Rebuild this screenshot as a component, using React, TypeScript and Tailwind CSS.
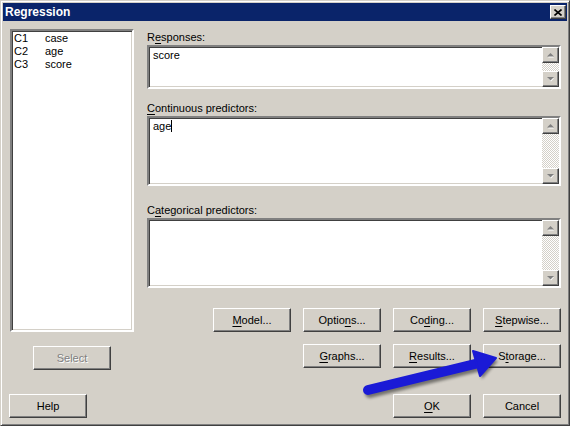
import React from 'react';

const raised =
  'border border-t-white border-l-white border-r-[#404040] border-b-[#404040] shadow-[inset_-1px_-1px_#808080] bg-[#d4d0c8]';
const sunken =
  'border-2 border-t-[#808080] border-l-[#808080] border-r-white border-b-white shadow-[inset_1px_1px_#404040,inset_-1px_-1px_#d4d0c8] bg-white';

const Btn = ({ children, disabled }: { children: React.ReactNode; disabled?: boolean }) => (
  <button
    className={`${raised} w-[78px] h-[24px] flex items-center justify-center text-[11px] ${
      disabled ? 'text-[#808080] [text-shadow:1px_1px_0_#fff]' : 'text-black'
    }`}
  >
    {children}
  </button>
);

const U = ({ children }: { children: React.ReactNode }) => <span className="underline underline-offset-2">{children}</span>;

const Arrow = ({ up }: { up?: boolean }) => (
  <div className={`${raised} h-[16px] flex items-center justify-center`}>
    <svg width="9" height="6" viewBox="0 0 9 6">
      {up ? (
        <>
          <path d="M2 5.5h6L5 2.5z" fill="#fff" />
          <path d="M1 4.5h7L4.5 1z" fill="#808080" />
        </>
      ) : (
        <>
          <path d="M2 2h6L5 5.5z" fill="#fff" />
          <path d="M1 1h7L4.5 4.5z" fill="#808080" />
        </>
      )}
    </svg>
  </div>
);

const Scrollbar = () => (
  <div className="w-[17px] flex flex-col">
    <Arrow up />
    <div className="flex-1 bg-[image:repeating-conic-gradient(#ffffff_0_25%,#d4d0c8_0_50%)] bg-[length:2px_2px]" />
    <Arrow />
  </div>
);

const Field = ({ className, children }: { className: string; children?: React.ReactNode }) => (
  <div className={`${sunken} ${className} flex`}>
    <div className="flex-1 pl-[4px] pt-[1px] leading-[14px] text-[11px]">{children}</div>
    <Scrollbar />
  </div>
);

const columns = [
  ['C1', 'case'],
  ['C2', 'age'],
  ['C3', 'score'],
];

export default function App() {
  return (
    <div className="w-[570px] h-[426px] relative bg-[#d4d0c8] border border-t-[#d4d0c8] border-l-[#d4d0c8] border-r-[#404040] border-b-[#404040] shadow-[inset_1px_1px_#fff,inset_-1px_-1px_#808080] p-[2px] font-['Liberation_Sans',Arial,sans-serif] text-black overflow-hidden">
      {/* Title bar */}
      <div className="h-[18px] bg-[#0a246a] flex items-center justify-between pl-[2px] pr-px">
        <span className="text-white font-bold text-[12px] leading-none">Regression</span>
        <div className={`${raised} w-[16px] h-[14px] flex items-center justify-center`}>
          <svg width="8" height="7" viewBox="0 0 8 7">
            <path d="M0.5 0.5L7.5 6.5M7.5 0.5L0.5 6.5" stroke="#000" strokeWidth="1.6" />
          </svg>
        </div>
      </div>

      {/* Body */}
      <div className="pl-[7px] pr-[6px] pt-[8px] flex flex-col text-[11px]">
        <div className="flex">
          {/* Variables list */}
          <div className="w-[124px] flex flex-col">
            <div className={`${sunken} h-[303px] pt-px pl-[2px]`}>
              {columns.map(([c, n]) => (
                <div key={c} className="flex h-[13px] leading-[13px]">
                  <span className="w-[31px]">{c}</span>
                  <span>{n}</span>
                </div>
              ))}
            </div>
            <div className="mt-[14px] ml-[23px]">
              <Btn disabled>Select</Btn>
            </div>
          </div>

          {/* Right side */}
          <div className="ml-[13px] w-[414px] flex flex-col">
            <div className="h-[16px] leading-[16px]">
              R<U>e</U>sponses:
            </div>
            <Field className="h-[44px]">score</Field>

            <div className="mt-[11px] h-[16px] leading-[16px]">
              <U>C</U>ontinuous predictors:
            </div>
            <Field className="h-[70px]">
              age<span className="inline-block w-px h-[12px] bg-black align-[-2px]" />
            </Field>

            <div className="mt-[16px] h-[16px] leading-[16px]">
              C<U>a</U>tegorical predictors:
            </div>
            <Field className="h-[70px]" />

            <div className="mt-[20px] flex justify-end gap-[12px]">
              <Btn><U>M</U>odel...</Btn>
              <Btn>Optio<U>n</U>s...</Btn>
              <Btn>Co<U>d</U>ing...</Btn>
              <Btn><U>S</U>tepwise...</Btn>
            </div>
            <div className="mt-[12px] flex justify-end gap-[12px]">
              <Btn><U>G</U>raphs...</Btn>
              <Btn><U>R</U>esults...</Btn>
              <Btn>S<U>t</U>orage...</Btn>
            </div>
          </div>
        </div>

        <div className="mt-[24px] flex items-center">
          <div className="-ml-px">
            <Btn>Help</Btn>
          </div>
          <div className="flex-1" />
          <div className="flex gap-[12px]">
            <Btn><U>O</U>K</Btn>
            <Btn>Cancel</Btn>
          </div>
        </div>
      </div>

      {/* Annotation arrow */}
      <svg className="absolute left-0 top-0 pointer-events-none" width="570" height="426" viewBox="0 0 570 426">
        <defs>
          <filter id="blur" x="-10%" y="-50%" width="120%" height="200%">
            <feGaussianBlur stdDeviation="1.5" />
          </filter>
        </defs>
        <g transform="translate(2 3)" fill="#000" stroke="#000" opacity="0.45" filter="url(#blur)">
          <line x1="367" y1="389" x2="478" y2="362" strokeWidth="10" strokeLinecap="round" />
          <polygon points="495,357 479,375 472,350" strokeWidth="0" />
        </g>
        <g fill="#1a1ad6" stroke="#1a1ad6">
          <line x1="367" y1="389" x2="478" y2="362" strokeWidth="10" strokeLinecap="round" />
          <polygon points="495,357 479,375 472,350" strokeLinejoin="round" strokeWidth="2" />
        </g>
      </svg>
    </div>
  );
}
